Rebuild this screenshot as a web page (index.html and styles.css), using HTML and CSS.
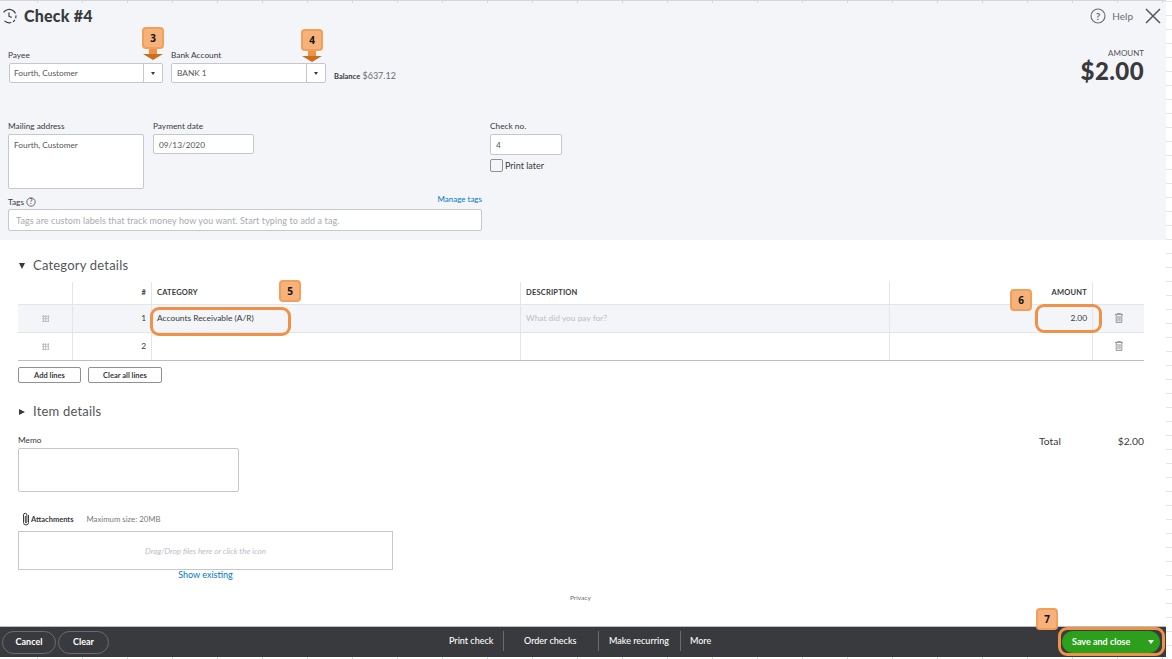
FILE: index.html
```html
<!DOCTYPE html>
<html lang="en">
<head>
<meta charset="utf-8">
<title>Check #4</title>
<link rel="stylesheet" href="styles.css">
</head>
<body>
<div class="page">
  <header class="head">
    <div class="title-row">
      <svg class="hist" viewBox="0 0 20 20" width="18" height="18"><path d="M4 6a7.500 7.500 0 1 1 1 9.500" fill="none" stroke="#393a3d" stroke-width="1.300" stroke-dasharray="16 2 3 2 3 2"/><path d="M10 6v4.500l3 1" fill="none" stroke="#393a3d" stroke-width="1.300"/></svg>
      <h1 class="title">Check #4</h1>
      <div class="top-actions">
        <svg viewBox="0 0 16 16" width="16" height="16"><circle cx="8" cy="8" r="7" fill="none" stroke="#6b6c72" stroke-width="1.100"/><text x="8" y="11.500" text-anchor="middle" class="q">?</text></svg>
        <span class="help">Help</span>
        <svg class="close" viewBox="0 0 16 16" width="16" height="16"><path d="M1 1l14 14M15 1L1 15" stroke="#55565a" stroke-width="1.500" fill="none"/></svg>
      </div>
    </div>
    <div class="row-one">
      <div class="field">
        <label class="lbl">Payee</label>
        <div class="combo payee"><span class="val">Fourth, Customer</span><span class="drop"></span></div>
      </div>
      <div class="field">
        <label class="lbl">Bank Account</label>
        <div class="combo bank"><span class="val">BANK 1</span><span class="drop"></span></div>
      </div>
      <div class="balance"><b>Balance</b> $637.12</div>
      <div class="big-amount"><span class="amt-lbl">AMOUNT</span><span class="amt">$2.00</span></div>
    </div>
    <div class="row-two">
      <div class="field"><label class="lbl">Mailing address</label><div class="box mail">Fourth, Customer</div></div>
      <div class="field"><label class="lbl">Payment date</label><div class="box date">09/13/2020</div></div>
      <div class="field check-no">
        <label class="lbl">Check no.</label><div class="box num">4</div>
        <div class="later"><span class="tick"></span><span>Print later</span></div>
      </div>
    </div>
    <div class="tags">
      <div class="tags-top">
        <span class="lbl tag-lbl">Tags <svg viewBox="0 0 12 12" width="10" height="10"><circle cx="6" cy="6" r="5" fill="none" stroke="#55565a"/><text x="6" y="8.800" text-anchor="middle" class="q small">?</text></svg></span>
        <a class="link manage">Manage tags</a>
      </div>
      <div class="box tag-box">Tags are custom labels that track money how you want. Start typing to add a tag.</div>
    </div>
  </header>

  <main class="body">
    <h2 class="sec first"><span class="tri-down"></span>Category details</h2>
    <div class="table">
      <div class="tr th">
        <div class="c c-drag"></div><div class="c c-n">#</div><div class="c c-cat">CATEGORY</div><div class="c c-desc">DESCRIPTION</div><div class="c c-amt">AMOUNT</div><div class="c c-del"></div>
      </div>
      <div class="tr alt">
        <div class="c c-drag"><span class="dots"></span></div><div class="c c-n">1</div><div class="c c-cat">Accounts Receivable (A/R)</div><div class="c c-desc hint">What did you pay for?</div><div class="c c-amt">2.00</div>
        <div class="c c-del"><svg class="trash" viewBox="0 0 10 12" width="8" height="10"><path d="M0 1.500h10M3 1.500V.5h4v1M1.500 1.500v10h7v-10M3.800 3.500v6.500M6.200 3.500v6.500" fill="none" stroke="#8d9096" stroke-width="1.200"/></svg></div>
      </div>
      <div class="tr last">
        <div class="c c-drag"><span class="dots"></span></div><div class="c c-n">2</div><div class="c c-cat"></div><div class="c c-desc"></div><div class="c c-amt"></div>
        <div class="c c-del"><svg class="trash" viewBox="0 0 10 12" width="8" height="10"><path d="M0 1.500h10M3 1.500V.5h4v1M1.500 1.500v10h7v-10M3.800 3.500v6.500M6.200 3.500v6.500" fill="none" stroke="#8d9096" stroke-width="1.200"/></svg></div>
      </div>
    </div>
    <div class="line-btns"><button class="btn add">Add lines</button><button class="btn clear-lines">Clear all lines</button></div>
    <h2 class="sec second"><span class="tri-right"></span>Item details</h2>
    <div class="memo-row">
      <div class="field"><label class="lbl">Memo</label><div class="box memo"></div></div>
      <div class="total"><span>Total</span><span>$2.00</span></div>
    </div>
    <div class="attach-head">
      <svg viewBox="0 0 10 14" width="10" height="14"><path d="M7.500 3v7.500a2.500 2.500 0 0 1-5 0V3a1.700 1.700 0 0 1 3.400 0v7a.8.8 0 0 1-1.600 0V4" fill="none" stroke="#393a3d"/></svg>
      <span class="att-name">Attachments</span><span class="att-max">Maximum size: 20MB</span>
    </div>
    <div class="dropzone">Drag/Drop files here or click the icon</div>
    <div class="show"><a class="link show-link">Show existing</a></div>
    <div class="privacy">Privacy</div>
  </main>

  <footer class="foot">
    <div class="foot-left"><button class="pill cancel">Cancel</button><button class="pill clear">Clear</button></div>
    <nav class="foot-mid"><span class="fa a1">Print check</span><span class="fa a2">Order checks</span><span class="fa a3">Make recurring</span><span class="fa a4">More</span></nav>
    <div class="save"><span>Save and close</span><span class="save-caret"></span></div>
  </footer>

  <div class="badge b3">3</div><div class="arrow a-3"></div>
  <div class="badge b4">4</div><div class="arrow a-4"></div>
  <div class="badge b5">5</div><div class="ring r5"></div>
  <div class="badge b6">6</div><div class="ring r6"></div>
  <div class="badge b7">7</div><div class="ring r7"></div>
</div>
</body>
</html>
```
FILE: styles.css
```css
* { box-sizing: border-box; }
html, body { margin: 0; padding: 0; height: 659px; overflow: hidden; background: #fff; }
body {
  font-family: Lato, "Open Sans", sans-serif;
  color: #393a3d;
  background-image:
    repeating-linear-gradient(to bottom, transparent 0 1px, #e3e5e8 1px 2px, transparent 2px 14px),
    repeating-linear-gradient(to right, transparent 0 37px, #d4d7dc 37px 38px, transparent 38px 45px);
  background-size: 6px 100%, 100% 2px;
  background-position: right top, left bottom;
  background-repeat: no-repeat;
}
.page { position: relative; width: 1166px; height: 657px; display: flex; flex-direction: column; background: #fff; }

.head {
  height: 240px; flex: none; background-color: #f3f5f8; border-top: 1px solid #d4d7dc; padding: 0 22px 0 8px;
  background-image: repeating-linear-gradient(to right, transparent 0 37px, #d4d7dc 37px 38px, transparent 38px 45px);
  background-size: 100% 2px;
  background-repeat: no-repeat;
}
.title-row { display: flex; align-items: center; height: 30px; }
.hist { margin-left: -8px; }
.title { margin: 0 0 0 6px; font-size: 16px; line-height: 30px; font-weight: 900; color: #393a3d; letter-spacing: .2px; }
.top-actions { margin-left: auto; margin-right: -17px; display: flex; align-items: center; }
.help { font-size: 10px; color: #6b6c72; margin: 0 12px 0 6px; }
.q { font: 700 10px Lato, sans-serif; fill: #6b6c72; }
.q.small { font-size: 8px; fill: #55565a; }

.lbl { display: block; font-size: 8.300px; line-height: 10px; color: #393a3d; margin-bottom: 3px; }
.box, .combo { background: #fff; border: 1px solid #c4c7cc; border-radius: 2px; font-size: 8.300px; color: #55565a; }

.row-one { display: flex; align-items: flex-start; margin-top: 19px; height: 69px; }
.combo { display: flex; height: 20px; align-items: center; }
.payee { width: 154px; margin-left: 1px; }
.bank { width: 155px; margin-left: 8px; }
.field:nth-child(2) .lbl { margin-left: 8px; }
.val { flex: 1; padding-left: 4px; }
.bank .val { padding-left: 5px; }
.drop { width: 19px; height: 100%; border-left: 1px solid #c4c7cc; position: relative; }
.drop::after { content: ""; position: absolute; left: 7px; top: 8px; border: 2.500px solid transparent; border-top: 3px solid #393a3d; border-bottom: 0; }
.balance { font-size: 9px; color: #6b6c72; margin: 20px 0 0 8px; }
.balance b { color: #393a3d; font-size: 7.500px; }
.big-amount { margin-left: auto; display: flex; flex-direction: column; align-items: flex-end; margin-top: -2px; }
.amt-lbl { font-size: 8px; line-height: 10px; color: #55565a; }
.amt { font-size: 24px; line-height: 26px; font-weight: 900; color: #393a3d; letter-spacing: .4px; }

.row-two { display: flex; height: 71px; margin-top: 2px; }
.mail { width: 136px; height: 55px; padding: 5px; }
.date { width: 101px; height: 20px; margin-left: 9px; padding: 5px; }
.row-two .field:nth-child(2) .lbl { margin-left: 9px; }
.check-no { margin-left: 236px; }
.num { width: 72px; height: 21px; padding: 5px; }
.later { display: flex; align-items: center; gap: 2px; margin-top: 4px; font-size: 9px; color: #393a3d; }
.tick { width: 13px; height: 13px; border: 1px solid #8d9096; border-radius: 2px; background: #f3f5f8; }

.tags { width: 474px; }
.tags-top { display: flex; align-items: flex-end; justify-content: space-between; height: 15px; margin-bottom: 2px; }
.tag-lbl { display: flex; align-items: center; gap: 2px; margin: 0; }
.link { color: #0077c5; font-size: 8px; }
.manage { position: relative; top: -3px; }
.tag-box { height: 22px; padding: 5px 7px; font-size: 9px; color: #a8abb0; letter-spacing: .09px; }

.body { flex: 1; padding: 0 22px 0 18px; }
.sec { margin: 0; font-size: 13px; line-height: 16px; font-weight: 400; color: #55565a; display: flex; align-items: center; letter-spacing: .2px; }
.first { margin-top: 17px; }
.tri-down { width: 0; height: 0; border: 3.500px solid transparent; border-top: 6px solid #393a3d; border-bottom: 0; margin: 1px 8px 0 1px; }
.tri-right { width: 0; height: 0; border: 3.500px solid transparent; border-left: 6px solid #393a3d; border-right: 0; margin: 2px 8px 0 1px; }

.table { margin-top: 9px; border-bottom: 1px solid #babec5; }
.tr { display: flex; height: 28px; border-top: 1px solid #e3e5e8; }
.th { height: 22px; border-top: 0; font-size: 7.500px; font-weight: 700; color: #393a3d; letter-spacing: .2px; }
.alt { background: #f3f5f8; }
.c { display: flex; align-items: center; border-right: 1px solid #e3e5e8; padding: 0 5px 1px; font-size: 8.400px; color: #393a3d; font-weight: inherit; letter-spacing: inherit; }
.th .c { font-size: 7.500px; padding-bottom: 2px; }
.c-drag { width: 55px; justify-content: center; }
.c-n { width: 79px; justify-content: flex-end; }
.c-cat { width: 369px; }
.c-desc { width: 369px; }
.c-amt { width: 203px; justify-content: flex-end; }
.c-del { width: 51px; border-right: 0; justify-content: center; }
.hint { color: #babec5; }
.dots { width: 7px; height: 7px; background-image: radial-gradient(circle, #a8abb0 .8px, transparent 1px); background-size: 2.500px 2.500px; }

.line-btns { display: flex; gap: 7px; margin-top: 6px; }
.btn { height: 16px; background: #fff; border: 1px solid #8d9096; border-radius: 2px; font: 700 7.500px Lato, sans-serif; color: #393a3d; padding: 0; }
.add { width: 63px; }
.clear-lines { width: 74px; }

.second { margin-top: 20px; }
.memo-row { display: flex; justify-content: space-between; margin-top: 16px; }
.memo-row .lbl { margin-bottom: 3px; }
.memo { width: 221px; height: 44px; }
.total { display: flex; justify-content: space-between; width: 105px; font-size: 10.300px; color: #393a3d; }

.attach-head { display: flex; align-items: center; height: 14px; margin-top: 20px; margin-left: 3px; }
.att-name { font-size: 7.500px; font-weight: 700; margin-left: 0; }
.att-max { font-size: 7.800px; color: #77787c; margin-left: 13px; }
.dropzone { width: 375px; height: 39px; margin-top: 5px; border: 1px solid #c4c7cc; display: flex; align-items: center; justify-content: center; font-size: 8px; font-style: italic; color: #babec5; }
.show { width: 375px; text-align: center; margin-top: -4px; line-height: 11px; }
.show-link { font-size: 9px; }
.privacy { margin: 13px 0 0 552px; font-size: 6.500px; line-height: 10px; color: #6b6c72; }

.foot { height: 31px; flex: none; background: #393a3d; border-top: 1px solid #babec5; display: flex; align-items: center; position: relative; color: #fff; }
.foot-left { display: flex; gap: 2px; margin-left: 2px; }
.pill { height: 23px; border: 1px solid #6b6c72; border-radius: 12px; background: #393a3d; color: #fff; font: 700 9px Lato, sans-serif; padding: 0 0 1px; }
.cancel { width: 54px; }
.clear { width: 51px; }
.foot-mid { display: flex; margin-left: 340px; height: 20px; align-items: center; margin-top: -2px; }
.fa { font-size: 9px; font-weight: 500; color: #fff; line-height: 20px; }
.a1 { padding-right: 10px; border-right: 1px solid #6b6c72; width: 55px; white-space: nowrap; }
.a2 { padding: 0 20px; border-right: 1px solid #6b6c72; width: 95px; white-space: nowrap; }
.a3 { padding: 0 10px; border-right: 1px solid #6b6c72; width: 82px; white-space: nowrap; }
.a4 { padding-left: 9px; }
.save { margin-left: auto; margin-right: 6px; width: 98px; height: 22px; background: #2ca01c; border-radius: 11px; display: flex; align-items: center; font-size: 9px; font-weight: 700; color: #fff; padding: 0 0 1px 10px; }
.save-caret { width: 0; height: 0; margin-left: auto; margin-right: 6px; border: 3px solid transparent; border-top: 4px solid #fff; border-bottom: 0; }

.badge { position: absolute; width: 22px; height: 22px; background: #f6b27a; border: 2px solid #f0a05a; border-radius: 4px; font: 700 10px "Open Sans", sans-serif; color: #111; display: flex; align-items: center; justify-content: center; }
.b3 { left: 142px; top: 27px; }
.b4 { left: 301px; top: 29px; }
.b5 { left: 279px; top: 280px; }
.b6 { left: 1010px; top: 289px; }
.b7 { left: 1036px; top: 608px; }
.arrow { position: absolute; width: 20px; height: 12px; }
.arrow::before { content: ""; position: absolute; left: 6px; top: 0; width: 8px; height: 6px; background: #ef9247; }
.arrow::after { content: ""; position: absolute; left: 0; top: 5px; border: 10px solid transparent; border-top: 6px solid #c9701f; border-bottom: 0; }
.a-3 { left: 143px; top: 49px; }
.a-4 { left: 302px; top: 51px; }
.ring { position: absolute; border: 3px solid #ef9247; border-radius: 9px; }
.r5 { left: 150px; top: 307px; width: 141px; height: 29px; }
.r6 { left: 1035px; top: 304px; width: 67px; height: 29px; }
.r7 { left: 1058px; top: 627px; width: 107px; height: 29px; }
```
